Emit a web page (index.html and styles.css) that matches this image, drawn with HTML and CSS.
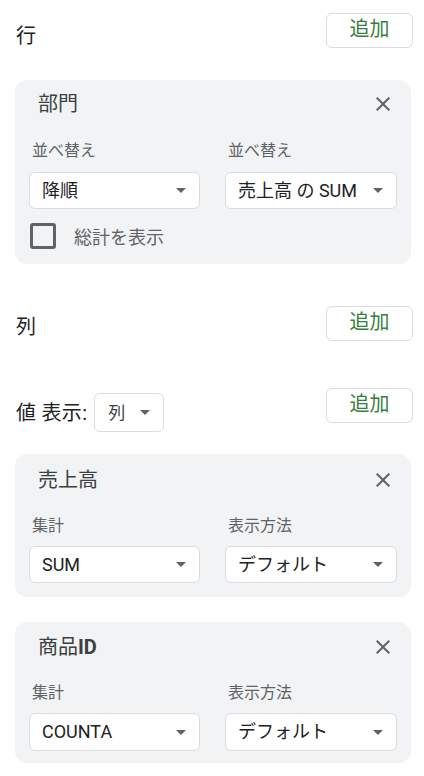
FILE: index.html
```html
<!DOCTYPE html>
<html lang="ja">
<head>
<meta charset="utf-8">
<link rel="stylesheet" href="styles.css">
</head>
<body>
<div class="panel">
  <div class="section-head head-rows">
    <span class="section-title">行</span>
    <button class="add-btn">追加</button>
  </div>

  <div class="card card-rows">
    <div class="card-head">
      <span class="card-title">部門</span>
      <svg class="close" viewBox="0 0 24 24" width="24" height="24"><path d="M19 6.41L17.59 5 12 10.59 6.41 5 5 6.41 10.59 12 5 17.59 6.41 19 12 13.41 17.59 19 19 17.59 13.41 12z"/></svg>
    </div>
    <div class="fields">
      <div class="field">
        <div class="field-label">並べ替え</div>
        <div class="select"><span class="select-text">降順</span><span class="arrow"></span></div>
      </div>
      <div class="field">
        <div class="field-label">並べ替え</div>
        <div class="select"><span class="select-text">売上高 の SUM</span><span class="arrow"></span></div>
      </div>
    </div>
    <div class="check-row">
      <span class="checkbox"></span>
      <span class="check-label">総計を表示</span>
    </div>
  </div>

  <div class="section-head head-cols">
    <span class="section-title">列</span>
    <button class="add-btn">追加</button>
  </div>

  <div class="section-head head-values">
    <div class="values-left">
      <span class="section-title">値 表示:</span>
      <div class="mini-select"><span class="select-text">列</span><span class="arrow"></span></div>
    </div>
    <button class="add-btn">追加</button>
  </div>

  <div class="card card-sales">
    <div class="card-head">
      <span class="card-title">売上高</span>
      <svg class="close" viewBox="0 0 24 24" width="24" height="24"><path d="M19 6.41L17.59 5 12 10.59 6.41 5 5 6.41 10.59 12 5 17.59 6.41 19 12 13.41 17.59 19 19 17.59 13.41 12z"/></svg>
    </div>
    <div class="fields">
      <div class="field">
        <div class="field-label">集計</div>
        <div class="select"><span class="select-text">SUM</span><span class="arrow"></span></div>
      </div>
      <div class="field">
        <div class="field-label">表示方法</div>
        <div class="select"><span class="select-text">デフォルト</span><span class="arrow"></span></div>
      </div>
    </div>
  </div>

  <div class="card card-product">
    <div class="card-head">
      <span class="card-title">商品<b class="bold">ID</b></span>
      <svg class="close" viewBox="0 0 24 24" width="24" height="24"><path d="M19 6.41L17.59 5 12 10.59 6.41 5 5 6.41 10.59 12 5 17.59 6.41 19 12 13.41 17.59 19 19 17.59 13.41 12z"/></svg>
    </div>
    <div class="fields">
      <div class="field">
        <div class="field-label">集計</div>
        <div class="select"><span class="select-text">COUNTA</span><span class="arrow"></span></div>
      </div>
      <div class="field">
        <div class="field-label">表示方法</div>
        <div class="select"><span class="select-text">デフォルト</span><span class="arrow"></span></div>
      </div>
    </div>
  </div>
</div>
</body>
</html>
```

FILE: styles.css
```css
* { box-sizing: border-box; }
html, body {
  margin: 0;
  padding: 0;
  background: #ffffff;
  font-family: Roboto, "Noto Sans CJK JP", "Noto Sans", sans-serif;
  color: #202124;
}
.panel {
  width: 424px;
  padding: 0 11px 0 15px;
  display: flex;
  flex-direction: column;
}
.section-head {
  display: flex;
  justify-content: space-between;
  align-items: flex-start;
}
.head-rows { margin-top: 13px; }
.head-rows .section-title { margin-top: 11px; padding-left: 1px; }
.head-cols { margin-top: 42px; }
.head-cols .section-title { margin-top: 9px; padding-left: 1px; }
.head-values { margin-top: 47px; }
.section-title {
  font-size: 20px;
  line-height: 24px;
  color: #202124;
}
.values-left {
  display: flex;
  align-items: center;
  gap: 7px;
  margin-top: 5px;
  padding-left: 1px;
}
.values-left .section-title { letter-spacing: 0.3px; }
.add-btn {
  width: 87px;
  height: 35px;
  border: 1px solid #dadce0;
  border-radius: 6px;
  background: #fff;
  color: #3a7d3e;
  font-family: Roboto, "Noto Sans CJK JP", sans-serif;
  font-size: 20px;
  line-height: 24px;
  padding: 0 0 4px;
}
.mini-select {
  width: 70px;
  height: 39px;
  border: 1px solid #dadce0;
  border-radius: 6px;
  background: #fff;
  display: flex;
  align-items: center;
  justify-content: space-between;
  padding: 0 13px 0 13px;
}
.mini-select .select-text { font-size: 17px; color: #3c4043; }
.card {
  background: #f1f3f4;
  border-radius: 12px;
  width: 396px;
  padding: 0 13px 0 14px;
}
.card-rows { margin-top: 32px; padding-bottom: 15px; }
.card-sales { margin-top: 22px; padding-bottom: 14px; }
.card-product { margin-top: 25px; padding-bottom: 12px; }
.card-head {
  display: flex;
  justify-content: space-between;
  align-items: center;
  height: 48px;
  padding-left: 9px;
}
.card-sales .card-head { height: 52px; }
.card-product .card-head { height: 50px; }
.card-title {
  font-size: 20px;
  color: #3c4043;
  line-height: 24px;
}
.bold { font-weight: 700; }
.close {
  fill: #5f6368;
  margin-right: 3px;
}
.fields {
  display: flex;
  gap: 25px;
  margin-top: 13px;
}
.card-sales .fields { margin-top: 10px; }
.card-product .fields { margin-top: 11px; }
.field { width: 172px; display: flex; flex-direction: column; }
.field:first-child { width: 171px; }
.field-label {
  font-size: 16px;
  line-height: 20px;
  color: #5f6368;
  padding-left: 3px;
  margin-bottom: 11px;
}
.card-sales .field-label { margin-bottom: 10px; }
.card-product .field-label { margin-bottom: 10px; }
.select {
  height: 37px;
  border: 1px solid #dadce0;
  border-radius: 6px;
  background: #fff;
  display: flex;
  align-items: center;
  justify-content: space-between;
  padding: 0 13px 0 12px;
}
.card-product .select { height: 38px; }
.select-text {
  font-size: 18px;
  color: #202124;
  line-height: 22px;
}
.arrow {
  width: 0;
  height: 0;
  border-left: 5.5px solid transparent;
  border-right: 5.5px solid transparent;
  border-top: 5.5px solid #5f6368;
}
.check-row {
  display: flex;
  align-items: center;
  gap: 18px;
  margin-top: 14px;
  padding-left: 1px;
}
.checkbox {
  width: 26px;
  height: 26px;
  border: 3px solid #5f6368;
  border-radius: 3px;
}
.check-label {
  font-size: 18px;
  color: #5f6368;
}
```
